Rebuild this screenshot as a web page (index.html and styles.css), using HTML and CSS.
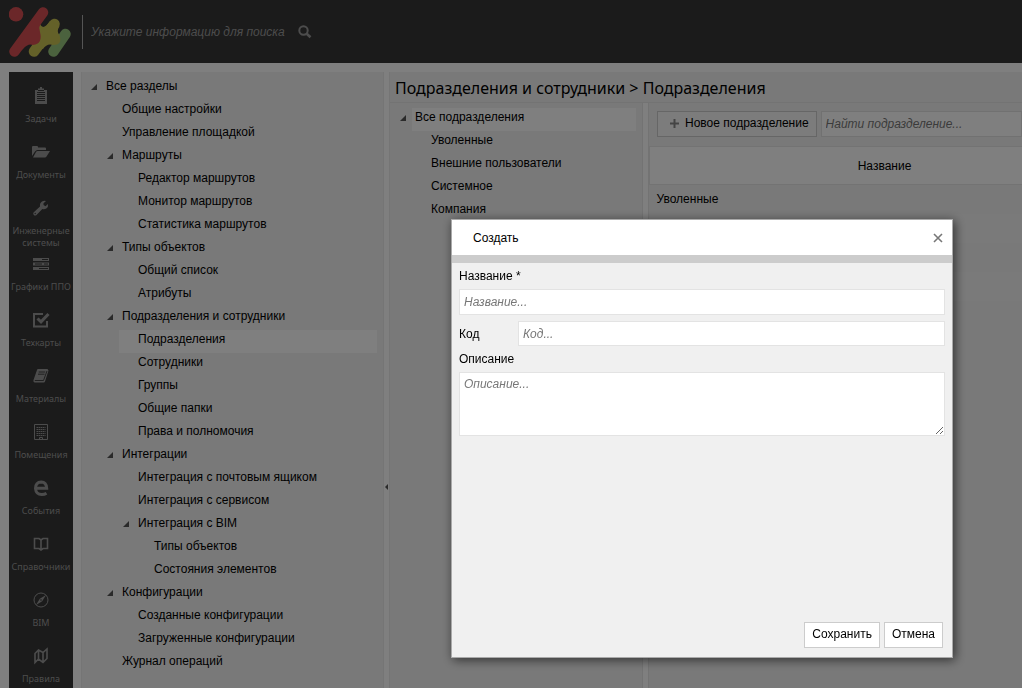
FILE: index.html
```html
<!DOCTYPE html>
<html lang="ru">
<head>
<meta charset="utf-8">
<title>Подразделения</title>
<link rel="stylesheet" href="styles.css">
</head>
<body>
<div class="app">
  <header class="top">
    <a class="logo" href="#" aria-label="Главная">
      <svg width="62" height="50" viewBox="0 0 62 50">
        <circle cx="7" cy="7.300" r="7.300" fill="#d64f52"/>
        <path d="M44.500 44.500 L56.500 27" stroke="#97c47c" stroke-width="10.500" stroke-linecap="round"/>
        <path d="M25 44.500 L45.500 17" stroke="#c8c252" stroke-width="10.500" stroke-linecap="round"/>
        <path d="M28 17 L31 17 Q34 24 41 14 L50.500 19 Q47 25 50.500 28 Q54 38 44 38 Q38 36 34 42 L23 40Z" fill="#c8c252"/>
        <path d="M5.500 44.500 L34 5.500" stroke="#d64f52" stroke-width="10.500" stroke-linecap="round"/>
        <path d="M37 9 Q28 18 31 25 Q34 37 24 38 Q19 36 14 42 L8 46 L10 30Z" fill="#d64f52"/>
      </svg>
    </a>
    <form class="search">
      <input class="search-input" type="text" aria-label="Поиск" placeholder="Укажите информацию для поиска">
      <button class="search-go" type="button" aria-label="Искать">
        <svg width="14" height="14" viewBox="0 0 14 14" fill="none" stroke="currentColor"><circle cx="5.500" cy="5.500" r="4.200" stroke-width="2"/><path d="M8.700 8.700 12.500 12.300" stroke-width="2.600"/></svg>
      </button>
    </form>
  </header>

  <div class="body">
    <nav class="rail">
      <a class="rail-item" href="#"><svg class="ico" viewBox="0 0 18 18"><path d="M3 3h3V1.500h2V0h2v1.500h2V3h3v14H3z" fill="currentColor"/><path d="M5 5.500h8M5 7.500h8M5 9.500h8M5 11.500h8M5 13.500h8" stroke="#363636"/><path d="M6 3.500h6" stroke="#363636"/></svg><span>Задачи</span></a>
      <a class="rail-item" href="#"><svg class="ico" viewBox="0 0 18 18" fill="currentColor"><path d="M0 13V4q0-1 1-1h4q1 0 1 1v.5h7q1 0 1 1V7H5.500Q4 7 3 8.500z"/><path d="M5.500 8H18l-3.500 5.500q-.5 1-1.500 1H1l3-5.500q.5-1 1.500-1z"/></svg><span>Документы</span></a>
      <a class="rail-item" href="#"><svg class="ico" viewBox="0 0 18 18"><path d="M1.500 13.500 8 7.500Q7.500 4 10 2.500 12 1.200 14 2L11.500 4.300V6l2 1.200L16 5q.5 3-1.700 4.500-2 1.200-4 .5L4.500 16q-1.500 1-2.700 0-1-1.200-.3-2.500z" fill="currentColor"/><circle cx="3.200" cy="14.500" r=".7" fill="#363636"/></svg><span>Инженерные системы</span></a>
      <a class="rail-item" href="#"><svg class="ico" viewBox="0 0 18 18"><path d="M1 3h16v3H1zM1 7.500h16v3H1zM1 12h16v3H1z" fill="currentColor"/><path d="M10 4.500h6M3 9h7M12 9h4M7 13.500h9" stroke="#363636"/></svg><span>Графики ППО</span></a>
      <a class="rail-item" href="#"><svg class="ico" viewBox="0 0 18 18" fill="none" stroke="currentColor"><path d="M11 3H2v12.500h13V10" stroke-width="2"/><path d="M5.500 7.500 9 10.800 16.500 3" stroke-width="3"/></svg><span>Техкарты</span></a>
      <a class="rail-item" href="#"><svg class="ico" viewBox="0 0 18 18"><path d="M6 2h9.500l1 1.500L13 14.500q-.3 1-1.300 1H2.500Q1 15 1.500 13L5 3q.3-1 1-1z" fill="currentColor"/><path d="M6.700 5h6.500M6 7.200h6.500M2.800 13.500h8.700L15 4" stroke="#363636" fill="none" stroke-width=".9"/></svg><span>Материалы</span></a>
      <a class="rail-item" href="#"><svg class="ico" viewBox="0 0 18 18" fill="none" stroke="currentColor"><path d="M2.500 1.500h13v15h-13z"/><path d="M4.500 4.500h9M4.500 6.500h9M4.500 8.500h9M4.500 10.500h9M4.500 12.500h9" stroke-dasharray="1.500 .5"/><path d="M7.500 16.500v-2h3v2"/></svg><span>Помещения</span></a>
      <a class="rail-item" href="#"><svg class="ico" viewBox="0 0 18 18" fill="none" stroke="currentColor" stroke-width="3"><path d="M4 9.300h10.700Q14.300 3 9.300 3 3.500 3.200 3.500 9.500 4 15.500 9.800 15.500q2.700 0 4.700-1.300"/></svg><span>События</span></a>
      <a class="rail-item" href="#"><svg class="ico" viewBox="0 0 18 18" fill="none" stroke="currentColor" stroke-width="1.600"><path d="M2.500 3.500H7L9 5l2-1.500h4.500v10H11L9 15l-2-1.500H2.500zM9 5v10"/></svg><span>Справочники</span></a>
      <a class="rail-item" href="#"><svg class="ico" viewBox="0 0 18 18"><circle cx="9" cy="9" r="7" fill="none" stroke="currentColor"/><path d="M14 4 10.200 10.200 4 14l3.800-6.200z" fill="currentColor"/><circle cx="9" cy="9" r=".8" fill="#363636"/></svg><span>BIM</span></a>
      <a class="rail-item" href="#"><svg class="ico" viewBox="0 0 18 18" fill="none" stroke="currentColor" stroke-width="1.600"><path d="M3 6.500 6.500 3 11 5.500l4-3.500v9.500L11 15.500 6.500 12 3 15.500zM6.500 3v9M11 5.500v10"/></svg><span>Правила</span></a>
    </nav>

    <aside class="sections">
      <ul class="tree">
        <li><div class="row"><i class="twisty"></i><a href="#">Все разделы</a></div>
          <ul>
            <li><div class="row leaf"><a href="#">Общие настройки</a></div></li>
            <li><div class="row leaf"><a href="#">Управление площадкой</a></div></li>
            <li><div class="row"><i class="twisty"></i><a href="#">Маршруты</a></div>
              <ul>
                <li><div class="row leaf"><a href="#">Редактор маршрутов</a></div></li>
                <li><div class="row leaf"><a href="#">Монитор маршрутов</a></div></li>
                <li><div class="row leaf"><a href="#">Статистика маршрутов</a></div></li>
              </ul></li>
            <li><div class="row"><i class="twisty"></i><a href="#">Типы объектов</a></div>
              <ul>
                <li><div class="row leaf"><a href="#">Общий список</a></div></li>
                <li><div class="row leaf"><a href="#">Атрибуты</a></div></li>
              </ul></li>
            <li><div class="row"><i class="twisty"></i><a href="#">Подразделения и сотрудники</a></div>
              <ul>
                <li><div class="row leaf"><a class="selected" href="#">Подразделения</a></div></li>
                <li><div class="row leaf"><a href="#">Сотрудники</a></div></li>
                <li><div class="row leaf"><a href="#">Группы</a></div></li>
                <li><div class="row leaf"><a href="#">Общие папки</a></div></li>
                <li><div class="row leaf"><a href="#">Права и полномочия</a></div></li>
              </ul></li>
            <li><div class="row"><i class="twisty"></i><a href="#">Интеграции</a></div>
              <ul>
                <li><div class="row leaf"><a href="#">Интеграция с почтовым ящиком</a></div></li>
                <li><div class="row leaf"><a href="#">Интеграция с сервисом</a></div></li>
                <li><div class="row"><i class="twisty"></i><a href="#">Интеграция с BIM</a></div>
                  <ul>
                    <li><div class="row leaf"><a href="#">Типы объектов</a></div></li>
                    <li><div class="row leaf"><a href="#">Состояния элементов</a></div></li>
                  </ul></li>
              </ul></li>
            <li><div class="row"><i class="twisty"></i><a href="#">Конфигурации</a></div>
              <ul>
                <li><div class="row leaf"><a href="#">Созданные конфигурации</a></div></li>
                <li><div class="row leaf"><a href="#">Загруженные конфигурации</a></div></li>
              </ul></li>
            <li><div class="row leaf"><a href="#">Журнал операций</a></div></li>
          </ul></li>
      </ul>
    </aside>
    <div class="splitter"><svg width="3" height="6" viewBox="0 0 3 6"><path d="M3 0v6L0 3z" fill="#555"/></svg></div>

    <main class="main">
      <h1 class="title">Подразделения и сотрудники &gt; Подразделения</h1>
      <div class="panes">
        <section class="units">
          <ul class="tree">
            <li><div class="row"><i class="twisty"></i><a class="selected" href="#">Все подразделения</a></div>
              <ul>
                <li><div class="row leaf"><a href="#">Уволенные</a></div></li>
                <li><div class="row leaf"><a href="#">Внешние пользователи</a></div></li>
                <li><div class="row leaf"><a href="#">Системное</a></div></li>
                <li><div class="row leaf"><a href="#">Компания</a></div></li>
              </ul></li>
          </ul>
        </section>
        <div class="splitter"></div>
        <section class="list">
          <div class="toolbar">
            <button class="btn btn-new" type="button"><svg width="9" height="9" viewBox="0 0 9 9"><path d="M4.500 0v9M0 4.500h9" stroke="#888" stroke-width="2"/></svg>Новое подразделение</button>
            <input class="field find" type="text" aria-label="Найти подразделение" placeholder="Найти подразделение...">
          </div>
          <table class="grid">
            <thead><tr><th>Название</th></tr></thead>
            <tbody>
              <tr><td>Уволенные</td></tr>
              <tr><td></td></tr>
              <tr><td></td></tr>
              <tr><td></td></tr>
            </tbody>
          </table>
        </section>
      </div>
    </main>
  </div>
</div>

<div class="shade">
  <form class="dialog" role="dialog" aria-labelledby="dlg-title">
    <div class="dialog-head">
      <h2 id="dlg-title">Создать</h2>
      <button class="close" type="button" aria-label="Закрыть"><svg width="10" height="10" viewBox="0 0 10 10"><path d="M1 1l8 8M9 1 1 9" stroke="#777" stroke-width="1.600"/></svg></button>
    </div>
    <div class="dialog-body">
      <label for="f-name">Название *</label>
      <input class="field" id="f-name" type="text" placeholder="Название...">
      <div class="inline">
        <label for="f-code">Код</label>
        <input class="field" id="f-code" type="text" placeholder="Код...">
      </div>
      <label for="f-desc">Описание</label>
      <textarea class="field" id="f-desc" placeholder="Описание..."></textarea>
    </div>
    <div class="dialog-foot">
      <button class="btn" type="button">Сохранить</button>
      <button class="btn" type="button">Отмена</button>
    </div>
  </form>
</div>
</body>
</html>
```
FILE: styles.css
```css
* { box-sizing: border-box; }
body {
  margin: 0;
  overflow: hidden;
  background: #fff;
  color: #000;
  font: 12px/18px "Liberation Sans", Arial, sans-serif;
}
a { color: inherit; text-decoration: none; }
ul { margin: 0; padding: 0; list-style: none; }
button, input, textarea { font: inherit; color: inherit; }
svg { display: block; }

.app { display: flex; flex-direction: column; height: 100vh; }

.top {
  display: flex;
  align-items: center;
  flex: none;
  height: 63px;
  padding: 0 9px;
  background: #363636;
}
.search {
  display: flex;
  align-items: center;
  height: 34px;
  margin-left: 11px;
  border-left: 1px solid #aaa;
}
.search-input {
  width: 215px;
  padding: 0 8px;
  border: 0;
  background: none;
  font-style: italic;
  color: #ccc;
}
.search-input::placeholder { color: #999; }
.search-go { padding: 0; border: 0; background: none; color: #999; }

.body {
  display: flex;
  flex: 1;
  min-height: 0;
  padding: 9px 0 0 9px;
}
.rail {
  flex: none;
  width: 64px;
  padding-top: 15px;
  overflow: hidden;
  background: #363636;
}
.rail-item {
  display: flex;
  flex-direction: column;
  align-items: center;
  gap: 8px;
  height: 56px;
  color: #999;
  font: 9px/12px "Noto Sans", "Open Sans", sans-serif;
  text-align: center;
}
.ico { flex: none; width: 18px; height: 18px; }

.sections {
  flex: none;
  width: 303px;
  margin-left: 8px;
  padding-top: 5px;
  overflow: hidden;
  background: #f2f2f2;
  border: 1px solid #eaeaea;
  border-width: 0 1px;
}
.tree ul { padding-left: 16px; }
.row {
  display: flex;
  padding: 0 6px 0 21px;
}
.row a {
  flex: 1;
  height: 23px;
  padding-left: 3px;
  white-space: nowrap;
}
.row.leaf { padding-left: 5px; }
.row.leaf a { padding-left: 19px; }
.twisty {
  width: 6px;
  height: 6px;
  margin: 7px 6px 0 -12px;
  background: #555;
  clip-path: polygon(100% 0, 100% 100%, 0 100%);
}
.selected { background: #fff; }

.splitter {
  display: flex;
  align-items: center;
  justify-content: center;
  flex: none;
  width: 5px;
  padding-top: 214px;
}

.main {
  display: flex;
  flex-direction: column;
  flex: 1;
  min-width: 0;
  background: #f2f2f2;
  border-left: 1px solid #eaeaea;
}
.title {
  margin: 0;
  padding: 4px 0 2px 5px;
  border-bottom: 1px solid #e6e6e6;
  font: 16px/24px "Noto Sans", "Open Sans", sans-serif;
  white-space: nowrap;
}
.panes { display: flex; flex: 1; min-height: 0; }
.panes .splitter { background: #fff; padding: 0; }
.units {
  flex: none;
  width: 253px;
  padding: 5px 0 0 1px;
  border-right: 1px solid #e6e6e6;
}
.list {
  flex: 1;
  min-width: 0;
  overflow: hidden;
  border-left: 1px solid #e6e6e6;
}
.toolbar { display: flex; gap: 4px; padding: 8px 0 9px 8px; }

.btn {
  height: 26px;
  padding: 0 7px 2px;
  border: 1px solid #ccc;
  background: #fff;
  white-space: nowrap;
}
.btn-new {
  display: flex;
  align-items: center;
  gap: 6px;
  padding-left: 12px;
  background: #f8f8f8;
}
.field {
  display: block;
  width: 100%;
  height: 26px;
  padding: 0 4px;
  border: 1px solid #e3e3e3;
  border-radius: 0;
  background: #fff;
  font-style: italic;
}
.field::placeholder { color: #777; }
.find { flex: 1; min-width: 0; }

.grid { width: 471px; border-collapse: collapse; }
.grid th {
  height: 38px;
  padding: 0;
  border: 1px solid #e6e6e6;
  background: #fff;
  font-weight: 400;
}
.grid td { height: 29px; padding: 0 7px; }
.grid tbody tr:nth-child(even) { background: #f5f5f5; }

.shade {
  position: fixed;
  inset: 0;
  background: rgba(0, 0, 0, .5);
}
.dialog {
  position: absolute;
  left: 451px;
  top: 219px;
  display: flex;
  flex-direction: column;
  width: 502px;
  height: 439px;
  border: 1px solid #aaa;
  background: #f0f0f0;
  box-shadow: 2px 2px 10px rgba(0, 0, 0, .6);
}
.dialog-head {
  display: flex;
  align-items: center;
  justify-content: space-between;
  height: 43px;
  padding: 0 9px 0 21px;
  border-bottom: 8px solid #ccc;
  background: #fff;
}
.dialog-head h2 { margin: 0; font: inherit; }
.close { padding: 0; border: 0; background: none; }
.dialog-body {
  display: flex;
  flex-direction: column;
  gap: 4px;
  flex: 1;
  padding: 4px 7px;
}
.inline { display: flex; align-items: center; margin-top: 2px; }
.inline label { flex: none; width: 59px; }
.inline .field { height: 25px; }
textarea.field { height: 64px; padding-top: 2px; }
.dialog-foot {
  display: flex;
  justify-content: flex-end;
  gap: 4px;
  padding: 9px;
}
```
